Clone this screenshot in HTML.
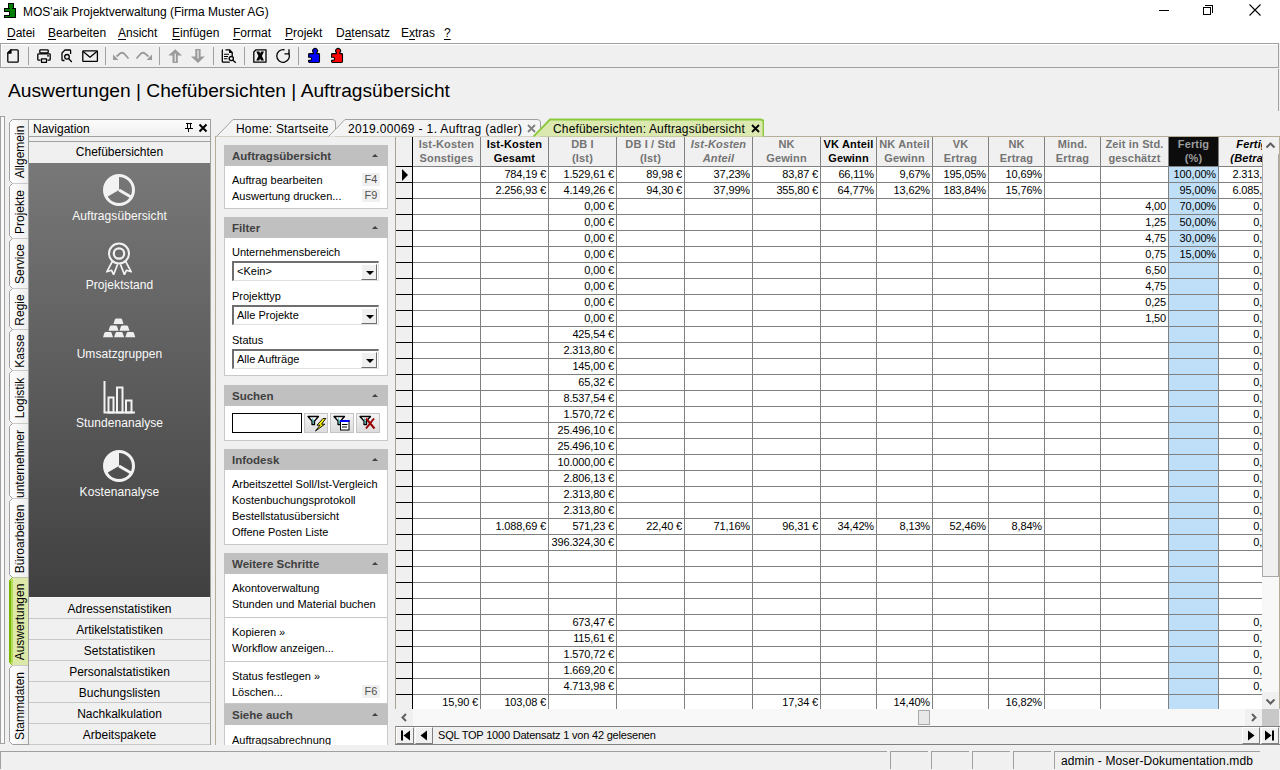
<!DOCTYPE html><html><head><meta charset="utf-8"><style>
*{margin:0;padding:0;box-sizing:border-box}
html,body{width:1280px;height:770px;overflow:hidden;background:#f0f0f0;font-family:"Liberation Sans",sans-serif;color:#000}
.a{position:absolute}
.nw{white-space:nowrap}
#title{left:0;top:0;width:1280px;height:43px;background:#fff}
.menu span{position:absolute;top:26px;font-size:12px;white-space:nowrap}
.menu u{text-decoration:underline;text-underline-offset:1.5px;text-decoration-thickness:1px}
#tb{left:0;top:43px;width:1279px;height:25px;border:1px solid #a0a0a0;background:#f0f0f0;box-shadow:inset 1px 1px 0 #fff}
.sep{position:absolute;top:3px;width:1px;height:18px;background:#a0a0a0}
#heading{left:8px;top:80px;font-size:19.2px;white-space:nowrap}
.vtx{position:absolute;left:19.5px;width:0;height:0}
.vtx span{position:absolute;left:0;top:0;transform:translate(-50%,-50%) rotate(-90deg);font-size:12px;line-height:14px;white-space:nowrap}
.navi{position:absolute;left:29px;width:181px;text-align:center;color:#fafafa;font-size:12px;white-space:nowrap;letter-spacing:0.08px}
.nb{position:absolute;left:29px;width:181px;height:21px;border-bottom:1px solid #c8c8c8;background:#f0f0f0;text-align:center;font-size:12px;line-height:22px;overflow:hidden}
.tp{position:absolute;left:224px;width:164px;background:#fff;border:1px solid #c8c8c8;border-top:none;font-size:11px}
.tph{position:absolute;left:224px;width:164px;height:21px;background:#c0c0c0;font-size:11.5px;font-weight:bold;color:#404040;line-height:23px;padding-left:8px}
.tph i{position:absolute;right:10px;top:9px;width:0;height:0;border-left:3px solid transparent;border-right:3px solid transparent;border-bottom:3px solid #404040}
.ti{position:absolute;left:7px;white-space:nowrap;font-size:11px}
.fk{position:absolute;left:137px;width:18px;height:13px;background:#f0f0f0;color:#505050;font-size:11px;text-align:center;line-height:13px}
.dd{position:absolute;left:232px;width:147px;height:20px;background:#fff;border-top:2px solid #6e6e6e;border-left:2px solid #6e6e6e;border-bottom:1px solid #e0e0e0;border-right:1px solid #e0e0e0;font-size:11px;line-height:16px;padding-left:3px}
.dd b{position:absolute;right:1px;top:1px;width:16px;height:16px;background:#f0f0f0;border-right:1px solid #6e6e6e;border-bottom:1px solid #6e6e6e;border-top:1px solid #fff;border-left:1px solid #fff}
.dd b:after{content:"";position:absolute;left:4px;top:6px;border-left:4px solid transparent;border-right:4px solid transparent;border-top:4px solid #000}
.gh{position:absolute;top:0px;height:28px;text-align:center;font-size:11px;line-height:14px;white-space:nowrap;overflow:hidden;letter-spacing:0.15px}
.gc{position:absolute;height:15px;text-align:right;font-size:11px;line-height:15px;padding-right:2px;white-space:nowrap;overflow:hidden;letter-spacing:-0.15px}
.sb{position:absolute;top:413px;width:24px;height:20px;background:linear-gradient(#f4f4f4,#dcdcdc);border:1px solid #c4c4c4}
</style></head><body>
<div id="title" class="a">
<svg class="a" style="left:0;top:0" width="20" height="20" viewBox="0 0 20 20" shape-rendering="crispEdges"><path d="M8.5 3H14V4H14V8H16V9H16V18H4V16H4V8H8V3Z" fill="#000"/><rect x="9" y="4" width="4" height="4" fill="#008000"/><rect x="10" y="7" width="2" height="2" fill="#008000"/><rect x="5" y="9" width="10" height="8" fill="#008000"/><rect x="4" y="11" width="6" height="5" fill="#000"/><rect x="4" y="12" width="5" height="3" fill="#fff"/><rect x="5" y="16" width="1" height="1" fill="#008000"/></svg>
<div class="a nw" style="left:23px;top:5px;font-size:12px">MOS'aik Projektverwaltung (Firma Muster AG)</div>
<div class="a" style="left:1159px;top:10px;width:10px;height:1px;background:#000"></div>
<div class="a" style="left:1205px;top:5px;width:8px;height:8px;border-top:1px solid #000;border-right:1px solid #000"></div>
<div class="a" style="left:1203px;top:7px;width:8px;height:8px;border:1px solid #000;background:#fff"></div>
<svg class="a" style="left:1249px;top:4px" width="12" height="12" viewBox="0 0 12 12"><path d="M0.5 0.5L11.5 11.5M11.5 0.5L0.5 11.5" stroke="#000" stroke-width="1.1"/></svg>
<div class="menu">
<span style="left:7px"><u>D</u>atei</span>
<span style="left:48px"><u>B</u>earbeiten</span>
<span style="left:118px"><u>A</u>nsicht</span>
<span style="left:172px"><u>E</u>infügen</span>
<span style="left:233px"><u>F</u>ormat</span>
<span style="left:285px"><u>P</u>rojekt</span>
<span style="left:336px">D<u>a</u>tensatz</span>
<span style="left:401px">E<u>x</u>tras</span>
<span style="left:444px"><u>?</u></span>
</div></div>
<div id="tb" class="a">
<div class="sep" style="left:27px"></div>
<div class="sep" style="left:104px"></div>
<div class="sep" style="left:158px"></div>
<div class="sep" style="left:212px"></div>
<div class="sep" style="left:243px"></div>
<div class="sep" style="left:297px"></div>
</div>
<svg class="a" style="left:0;top:43px" width="360" height="25" viewBox="0 43 360 25">
<g fill="none" stroke="#000" stroke-width="1.3" stroke-linejoin="round">
<path d="M11 49.8H17.2Q18.2 49.8 18.2 50.8V61.2Q18.2 62.2 17.2 62.2H8.8Q7.8 62.2 7.8 61.2V53Z"/>
<path d="M8 53L11 50V53Z" fill="#000"/>
<rect x="39.8" y="49.8" width="8.4" height="3.2" rx="0.8"/>
<path d="M40.5 60.2H38.6Q37.8 60.2 37.8 59.4V54.6Q37.8 53.8 38.6 53.8H49.4Q50.2 53.8 50.2 54.6V59.4Q50.2 60.2 49.4 60.2H47.5"/>
<rect x="41.5" y="58.8" width="5" height="3.5"/>
<path d="M64.5 60.5H62.8Q62 60.5 62 59.7V53L65 50H69.8Q70.6 50 70.6 50.8V54"/>
<circle cx="67" cy="56.8" r="2.3"/>
<path d="M68.8 58.8L71.8 62"/>
<rect x="82.8" y="50.8" width="14.6" height="10.6" rx="0.6"/>
<path d="M83.2 51.4L90 57.2L96.8 51.4"/>
<path d="M225.5 49.8H229.5L232.2 52.5V56 M229.8 62.2H223Q222.3 62.2 222.3 61.5V50.5Q222.3 49.8 223 49.8" />
<path d="M224 54.3H229 M224 56.5H228 M224 58.7H227.5" stroke-width="1.1"/>
<circle cx="231.3" cy="58.6" r="2.1"/>
<path d="M232.8 60.2L235.8 62.8"/>
<path d="M256 49.8H266V62.2H253.8V52Z"/>
<path d="M284.6 49.9A6.3 6.3 0 1 0 288.6 53" />
<path d="M289 49.2V53.8H284.5" />
</g>
<path d="M229 49.5L232.5 53H229Z" fill="#000"/><circle cx="48" cy="55.8" r="0.9" fill="#000"/>
<path d="M256.3 51.5H259.3L260.2 53.5L261.1 51.5H264L261.9 56L264 60.6H261L260.1 58.4L259.2 60.6H256.2L258.4 56Z" fill="#000"/>
<g fill="none" stroke="#9a9a9a" stroke-width="1.8">
<path d="M128.5 58.5L124 53.5Q122 52 120 53.5L116.5 56.5"/>
<path d="M136.5 58.5L141 53.5Q143 52 145 53.5L148.5 56.5"/>
</g>
<path d="M113 54.5V60H118.5Z" fill="#9a9a9a"/>
<path d="M152 54.5V60H146.5Z" fill="#9a9a9a"/>
<path d="M175.2 49.2L182 55.5H177.8V63H172.5V55.5H168.3Z" fill="#9a9a9a"/>
<path d="M175.2 53.5V61.8" stroke="#fff" stroke-width="1"/>
<path d="M198 63L191 56.5H195.3V49H200.6V56.5H204.8Z" fill="#9a9a9a"/>
<path d="M198 50.2V58.5" stroke="#fff" stroke-width="1"/>
<g stroke="#000" stroke-width="1.1" stroke-linejoin="round">
<path d="M309.5 53.6H313.4V52.6A2.4 2.4 0 1 1 316.8 52.6V53.6H318.6Q319.5 53.6 319.5 54.5V61.6Q319.5 62.5 318.6 62.5H309.5Q308.6 62.5 308.6 61.6V60.4H310A1.6 1.6 0 1 0 310 57.2H308.6V54.5Q308.6 53.6 309.5 53.6Z" fill="#0000ff"/>
<path d="M332.5 53.6H336.4V52.6A2.4 2.4 0 1 1 339.8 52.6V53.6H341.6Q342.5 53.6 342.5 54.5V61.6Q342.5 62.5 341.6 62.5H332.5Q331.6 62.5 331.6 61.6V60.4H333A1.6 1.6 0 1 0 333 57.2H331.6V54.5Q331.6 53.6 332.5 53.6Z" fill="#ff0000"/>
</g>
</svg>
<div class="a" style="left:1278px;top:69px;width:1px;height:42px;background:#a0a0a0"></div>
<div id="heading" class="a">Auswertungen | Chefübersichten | Auftragsübersicht</div>
<div class="a" style="left:0;top:116px;width:5px;height:628px;border:1px solid #a0a0a0;border-left:1px solid #a0a0a0;background:#fafafa"></div>
<svg class="a" style="left:0;top:0" width="30" height="770" viewBox="0 0 30 770"><defs><linearGradient id="vg" x1="0" x2="1" y1="0" y2="0"><stop offset="0" stop-color="#ffffff"/><stop offset="1" stop-color="#eeeeee"/></linearGradient></defs><path d="M9.5 122.5L12.5 119.5H28V183.5H12.5L9.5 180.5Z" fill="url(#vg)"/><path d="M9.5 122.5V180.5" stroke="#a0a0a0" stroke-width="1"/><path d="M9.5 122.5L12.5 119.5M9.5 180.5L12.5 183.5" stroke="#a0a0a0" stroke-width="1"/><path d="M12.5 183.5H28.5" stroke="#a0a0a0" stroke-width="1"/><path d="M9.5 186.5L12.5 183.5H28V238.5H12.5L9.5 235.5Z" fill="url(#vg)"/><path d="M9.5 186.5V235.5" stroke="#a0a0a0" stroke-width="1"/><path d="M9.5 186.5L12.5 183.5M9.5 235.5L12.5 238.5" stroke="#a0a0a0" stroke-width="1"/><path d="M12.5 238.5H28.5" stroke="#a0a0a0" stroke-width="1"/><path d="M9.5 241.5L12.5 238.5H28V288.5H12.5L9.5 285.5Z" fill="url(#vg)"/><path d="M9.5 241.5V285.5" stroke="#a0a0a0" stroke-width="1"/><path d="M9.5 241.5L12.5 238.5M9.5 285.5L12.5 288.5" stroke="#a0a0a0" stroke-width="1"/><path d="M12.5 288.5H28.5" stroke="#a0a0a0" stroke-width="1"/><path d="M9.5 291.5L12.5 288.5H28V329.5H12.5L9.5 326.5Z" fill="url(#vg)"/><path d="M9.5 291.5V326.5" stroke="#a0a0a0" stroke-width="1"/><path d="M9.5 291.5L12.5 288.5M9.5 326.5L12.5 329.5" stroke="#a0a0a0" stroke-width="1"/><path d="M12.5 329.5H28.5" stroke="#a0a0a0" stroke-width="1"/><path d="M9.5 332.5L12.5 329.5H28V370.5H12.5L9.5 367.5Z" fill="url(#vg)"/><path d="M9.5 332.5V367.5" stroke="#a0a0a0" stroke-width="1"/><path d="M9.5 332.5L12.5 329.5M9.5 367.5L12.5 370.5" stroke="#a0a0a0" stroke-width="1"/><path d="M12.5 370.5H28.5" stroke="#a0a0a0" stroke-width="1"/><path d="M9.5 373.5L12.5 370.5H28V423.5H12.5L9.5 420.5Z" fill="url(#vg)"/><path d="M9.5 373.5V420.5" stroke="#a0a0a0" stroke-width="1"/><path d="M9.5 373.5L12.5 370.5M9.5 420.5L12.5 423.5" stroke="#a0a0a0" stroke-width="1"/><path d="M12.5 423.5H28.5" stroke="#a0a0a0" stroke-width="1"/><path d="M9.5 426.5L12.5 423.5H28V498.5H12.5L9.5 495.5Z" fill="url(#vg)"/><path d="M9.5 426.5V495.5" stroke="#a0a0a0" stroke-width="1"/><path d="M9.5 426.5L12.5 423.5M9.5 495.5L12.5 498.5" stroke="#a0a0a0" stroke-width="1"/><path d="M12.5 498.5H28.5" stroke="#a0a0a0" stroke-width="1"/><path d="M9.5 501.5L12.5 498.5H28V577.5H12.5L9.5 574.5Z" fill="url(#vg)"/><path d="M9.5 501.5V574.5" stroke="#a0a0a0" stroke-width="1"/><path d="M9.5 501.5L12.5 498.5M9.5 574.5L12.5 577.5" stroke="#a0a0a0" stroke-width="1"/><path d="M12.5 577.5H28.5" stroke="#a0a0a0" stroke-width="1"/><path d="M9.5 580.5L12.5 577.5H28V665.5H12.5L9.5 662.5Z" fill="#dde9a9"/><path d="M10 580.5V662.5" stroke="#78b800" stroke-width="2"/><path d="M12 579.5V663.5" stroke="#b4dc5a" stroke-width="2"/><path d="M9.5 580.5L12.5 577.5M9.5 662.5L12.5 665.5" stroke="#80c000" stroke-width="1"/><path d="M12.5 665.5H28.5" stroke="#a0a0a0" stroke-width="1"/><path d="M9.5 668.5L12.5 665.5H28V744.5H12.5L9.5 741.5Z" fill="url(#vg)"/><path d="M9.5 668.5V741.5" stroke="#a0a0a0" stroke-width="1"/><path d="M9.5 668.5L12.5 665.5M9.5 741.5L12.5 744.5" stroke="#a0a0a0" stroke-width="1"/><path d="M12.5 744.5H28.5" stroke="#a0a0a0" stroke-width="1"/><path d="M12.5 119.5H28.5" stroke="#a0a0a0" stroke-width="1"/></svg>
<div class="vtx" style="top:152.0px"><span>Allgemein</span></div>
<div class="vtx" style="top:211.5px"><span>Projekte</span></div>
<div class="vtx" style="top:264.0px"><span>Service</span></div>
<div class="vtx" style="top:309.5px"><span>Regie</span></div>
<div class="vtx" style="top:350.5px"><span>Kasse</span></div>
<div class="vtx" style="top:397.5px"><span>Logistik</span></div>
<div class="vtx" style="top:463.5px"><span>unternehmer</span></div>
<div class="vtx" style="top:538.5px"><span>Büroarbeiten</span></div>
<div class="vtx" style="top:622.0px"><span>Auswertungen</span></div>
<div class="vtx" style="top:705.5px"><span>Stammdaten</span></div>
<div class="a" style="left:12px;top:424px;width:16px;height:74px;overflow:hidden"></div>
<div class="a" style="left:28px;top:119px;width:183px;height:626px;border:1px solid #a0a0a0;background:#f0f0f0"></div>
<div class="a" style="left:29px;top:120px;width:181px;height:17px;background:linear-gradient(#fcfcfc,#f0f0f0);border-bottom:1px solid #a0a0a0"></div>
<div class="a nw" style="left:33px;top:122px;font-size:12px">Navigation</div>
<svg class="a" style="left:184px;top:123px" width="10" height="10" viewBox="0 0 10 10" shape-rendering="crispEdges"><path d="M2 0h6v1H7v4h2v1H1V5h2V1H2z" fill="#000"/><rect x="4" y="1" width="2" height="4" fill="#f4f4f4"/><rect x="4" y="6" width="1" height="3" fill="#000"/></svg>
<svg class="a" style="left:198px;top:123px" width="10" height="10" viewBox="0 0 10 10"><path d="M1.5 1.5L8.5 8.5M8.5 1.5L1.5 8.5" stroke="#000" stroke-width="2"/></svg>
<div class="a" style="left:29px;top:141px;width:181px;height:22px;border-top:1px solid #a0a0a0;background:#f0f0f0;text-align:center;font-size:12px;line-height:21px">Chefübersichten</div>
<div class="a" style="left:29px;top:163px;width:181px;height:434px;background:linear-gradient(#787878,#404040)"></div>
<svg class="a" style="left:101px;top:172px" width="36" height="36" viewBox="0 0 36 36"><circle cx="18" cy="18" r="14.5" fill="none" stroke="#f2f2f2" stroke-width="3"/><path d="M18 18L18 3.5A14.5 14.5 0 0 0 5.44 25.25Z" fill="#f2f2f2"/><path d="M18 18L30.56 25.25" stroke="#f2f2f2" stroke-width="3"/></svg>
<div class="navi" style="top:209px">Auftragsübersicht</div>
<svg class="a" style="left:104px;top:241px" width="30" height="34" viewBox="0 0 30 34"><circle cx="15" cy="12.5" r="10" fill="none" stroke="#f2f2f2" stroke-width="2"/><circle cx="15" cy="12.5" r="5.2" fill="none" stroke="#f2f2f2" stroke-width="2.2"/><path d="M8.3 20.5L2.8 30.8L7.6 29.3L9.6 33.6L13.6 23.2M21.7 20.5L27.2 30.8L22.4 29.3L20.4 33.6L16.4 23.2" fill="none" stroke="#f2f2f2" stroke-width="1.7" stroke-linejoin="round"/></svg>
<div class="navi" style="top:278px">Projektstand</div>
<svg class="a" style="left:99px;top:313px" width="40" height="28" viewBox="99 313 40 28"><path d="M113.5 323.9L114.8 319.8Q115.1 318.5 116.4 318.5H120.6Q121.9 318.5 122.2 319.8L123.5 323.9ZM108.5 330.8L109.8 326.7Q110.1 325.4 111.4 325.4H115.6Q116.9 325.4 117.2 326.7L118.5 330.8ZM119.5 330.8L120.8 326.7Q121.1 325.4 122.4 325.4H126.6Q127.9 325.4 128.2 326.7L129.5 330.8ZM103.0 337.3L104.3 333.2Q104.6 331.9 105.9 331.9H110.1Q111.4 331.9 111.7 333.2L113.0 337.3ZM114.1 337.3L115.4 333.2Q115.7 331.9 117.0 331.9H121.2Q122.5 331.9 122.8 333.2L124.1 337.3ZM125.3 337.3L126.6 333.2Q126.9 331.9 128.2 331.9H132.4Q133.7 331.9 134.0 333.2L135.3 337.3Z" fill="#eeeeee"/></svg>
<div class="navi" style="top:347px">Umsatzgruppen</div>
<svg class="a" style="left:102px;top:380px" width="36" height="36" viewBox="0 0 36 36"><path d="M2.5 1V32.5H33" fill="none" stroke="#f2f2f2" stroke-width="2"/><rect x="6.5" y="17.5" width="5" height="15" fill="none" stroke="#f2f2f2" stroke-width="2"/><rect x="15" y="7.5" width="5.5" height="25" fill="none" stroke="#f2f2f2" stroke-width="2"/><rect x="24" y="20.5" width="5.5" height="12" fill="none" stroke="#f2f2f2" stroke-width="2"/></svg>
<div class="navi" style="top:416px">Stundenanalyse</div>
<svg class="a" style="left:101px;top:448px" width="36" height="36" viewBox="0 0 36 36"><circle cx="18" cy="18" r="14.5" fill="none" stroke="#f2f2f2" stroke-width="3"/><path d="M18 18L18 3.5A14.5 14.5 0 0 0 5.44 25.25Z" fill="#f2f2f2"/><path d="M18 18L30.56 25.25" stroke="#f2f2f2" stroke-width="3"/></svg>
<div class="navi" style="top:485px">Kostenanalyse</div>
<div class="nb" style="top:598px">Adressenstatistiken</div>
<div class="nb" style="top:619px">Artikelstatistiken</div>
<div class="nb" style="top:640px">Setstatistiken</div>
<div class="nb" style="top:661px">Personalstatistiken</div>
<div class="nb" style="top:682px">Buchungslisten</div>
<div class="nb" style="top:703px">Nachkalkulation</div>
<div class="nb" style="top:724px">Arbeitspakete</div>
<div class="a" style="left:29px;top:597px;width:181px;height:1px;background:#f6f6f6"></div>
<div class="a" style="left:215px;top:136px;width:1065px;height:609px;border-top:1px solid #b4ad98;border-left:1px solid #b4ad98;background:#f0f0f0"></div>
<svg class="a" style="left:216px;top:118px" width="120" height="19" viewBox="0 0 120 19"><path d="M0.5 18.5L17 1.5H116.0Q119.5 1.5 119.5 4V18.5" fill="#f4f4f4" stroke="#a0a0a0" stroke-width="1.0"/></svg>
<svg class="a" style="left:328px;top:118px" width="213" height="19" viewBox="0 0 213 19"><path d="M0.5 18.5L17 1.5H209.0Q212.5 1.5 212.5 4V18.5" fill="#f4f4f4" stroke="#a0a0a0" stroke-width="1.0"/></svg>
<svg class="a" style="left:533px;top:118px" width="231" height="19" viewBox="0 0 231 19"><path d="M0.5 18.5L17 1.5H227.0Q230.5 1.5 230.5 4V18.5" fill="#dbe9b0" stroke="#8cc83c" stroke-width="1.8"/></svg>
<div class="a nw" style="left:236px;top:122px;font-size:12px;letter-spacing:0.2px">Home: Startseite</div>
<div class="a nw" style="left:348px;top:122px;font-size:12px;letter-spacing:0.35px">2019.00069 - 1. Auftrag (adler)</div>
<svg class="a" style="left:527px;top:124px" width="9" height="9" viewBox="0 0 9 9"><path d="M1 1L8 8M8 1L1 8" stroke="#808080" stroke-width="1.8"/></svg>
<div class="a nw" style="left:553px;top:122px;font-size:12px;letter-spacing:0.15px">Chefübersichten: Auftragsübersicht</div>
<svg class="a" style="left:751px;top:124px" width="9" height="9" viewBox="0 0 9 9"><path d="M1 1L8 8M8 1L1 8" stroke="#000" stroke-width="1.8"/></svg>
<div class="tph" style="top:145px">Auftragsübersicht<i></i></div>
<div class="tp" style="top:166px;height:43px">
<div class="ti" style="top:8px">Auftrag bearbeiten</div><div class="fk" style="top:7px">F4</div>
<div class="ti" style="top:24px">Auswertung drucken...</div><div class="fk" style="top:23px">F9</div>
</div>
<div class="tph" style="top:217px">Filter<i></i></div>
<div class="tp" style="top:238px;height:138px">
<div class="ti" style="top:8px">Unternehmensbereich</div>
<div class="ti" style="top:52px">Projekttyp</div>
<div class="ti" style="top:96px">Status</div>
</div>
<div class="dd" style="top:261px">&lt;Kein&gt;<b></b></div>
<div class="dd" style="top:305px">Alle Projekte<b></b></div>
<div class="dd" style="top:349px">Alle Aufträge<b></b></div>
<div class="tph" style="top:385px">Suchen<i></i></div>
<div class="tp" style="top:406px;height:35px"></div>
<div class="a" style="left:232px;top:413px;width:70px;height:20px;border:1px solid #000;background:#fff"></div>
<div class="sb" style="left:304px"><svg class="a" style="left:0;top:0" width="22" height="18" viewBox="0 0 22 18"><path d="M3 2.5H13.5L9.5 7V10.5H7V7Z" fill="#fff" stroke="#000" stroke-width="1.3" stroke-linejoin="round"/><path d="M7.5 4.5L8.3 7.5V9.5" stroke="#20b0b0" stroke-width="1"/><path d="M18 4.5L12 11.2H15L10.5 17L19.8 10.2H16.5L20.8 4.5Z" fill="#f8f000" stroke="#000" stroke-width="0.9" stroke-linejoin="round"/></svg></div>
<div class="sb" style="left:330px"><svg class="a" style="left:0;top:0" width="22" height="18" viewBox="0 0 22 18"><path d="M3 2.5H13.5L9.5 7V10.5H7V7Z" fill="#fff" stroke="#000" stroke-width="1.3" stroke-linejoin="round"/><path d="M7.5 4.5L8.3 7.5V9.5" stroke="#20b0b0" stroke-width="1"/><rect x="9.5" y="6.5" width="8.5" height="9.5" fill="#fff" stroke="#000" stroke-width="1"/><rect x="9" y="6" width="9.5" height="2" fill="#0000f0"/><path d="M11 10.5H16.5M11 13H16" stroke="#000" stroke-width="1"/></svg></div>
<div class="sb" style="left:356px"><svg class="a" style="left:0;top:0" width="22" height="18" viewBox="0 0 22 18"><path d="M3 2.5H13.5L9.5 7V10.5H7V7Z" fill="#fff" stroke="#000" stroke-width="1.3" stroke-linejoin="round"/><path d="M7.5 4.5L8.3 7.5V9.5" stroke="#20b0b0" stroke-width="1"/><path d="M9 4.5L17.5 14.5M17 4.5L9 14.5" stroke="#9a0000" stroke-width="2"/></svg></div>
<div class="tph" style="top:449px">Infodesk<i></i></div>
<div class="tp" style="top:470px;height:75px">
<div class="ti" style="top:8px">Arbeitszettel Soll/Ist-Vergleich</div>
<div class="ti" style="top:24px">Kostenbuchungsprotokoll</div>
<div class="ti" style="top:40px">Bestellstatusübersicht</div>
<div class="ti" style="top:56px">Offene Posten Liste</div>
</div>
<div class="tph" style="top:553px">Weitere Schritte<i></i></div>
<div class="tp" style="top:574px;height:130px">
<div class="ti" style="top:8px">Akontoverwaltung</div>
<div class="ti" style="top:24px">Stunden und Material buchen</div>
<div class="a" style="left:0;top:43px;width:162px;height:1px;background:#c8c8c8"></div>
<div class="ti" style="top:52px">Kopieren »</div>
<div class="ti" style="top:68px">Workflow anzeigen...</div>
<div class="a" style="left:0;top:87px;width:162px;height:1px;background:#c8c8c8"></div>
<div class="ti" style="top:96px">Status festlegen »</div>
<div class="ti" style="top:112px">Löschen...</div>
<div class="fk" style="top:111px">F6</div>
</div>
<div class="tph" style="top:704px">Siehe auch<i></i></div>
<div class="tp" style="top:725px;height:20px;border-bottom:none;overflow:hidden"><div class="ti" style="top:9px">Auftragsabrechnung</div></div>
<div class="a" style="left:215px;top:745px;width:180px;height:6px;background:#f0f0f0"></div>
<div class="a" style="left:395px;top:137px;width:867px;height:572px;overflow:hidden;background:#fff">
<div class="a" style="left:0;top:0;width:867px;height:29px;background:#f0f0f0"></div>
<div class="a" style="left:1px;top:29px;width:16px;height:543px;background:#f0f0f0"></div>
<div class="a" style="left:774px;top:0;width:49px;height:29px;background:#0c0c0c"></div>
<div class="a" style="left:774px;top:30px;width:49px;height:542px;background:#bfdff8"></div>
<div class="a" style="left:0;top:0;width:1px;height:572px;background:#a8a290"></div>
<div class="a" style="left:1px;top:29px;width:866px;height:1px;background:#808080"></div>
<div class="a" style="left:1px;top:29px;width:17px;height:1px;background:#000"></div>
<div class="a" style="left:18px;top:45px;width:849px;height:1px;background:#808080"></div>
<div class="a" style="left:1px;top:45px;width:17px;height:1px;background:#000"></div>
<div class="a" style="left:18px;top:61px;width:849px;height:1px;background:#808080"></div>
<div class="a" style="left:1px;top:61px;width:17px;height:1px;background:#000"></div>
<div class="a" style="left:18px;top:77px;width:849px;height:1px;background:#808080"></div>
<div class="a" style="left:1px;top:77px;width:17px;height:1px;background:#000"></div>
<div class="a" style="left:18px;top:93px;width:849px;height:1px;background:#808080"></div>
<div class="a" style="left:1px;top:93px;width:17px;height:1px;background:#000"></div>
<div class="a" style="left:18px;top:109px;width:849px;height:1px;background:#808080"></div>
<div class="a" style="left:1px;top:109px;width:17px;height:1px;background:#000"></div>
<div class="a" style="left:18px;top:125px;width:849px;height:1px;background:#808080"></div>
<div class="a" style="left:1px;top:125px;width:17px;height:1px;background:#000"></div>
<div class="a" style="left:18px;top:141px;width:849px;height:1px;background:#808080"></div>
<div class="a" style="left:1px;top:141px;width:17px;height:1px;background:#000"></div>
<div class="a" style="left:18px;top:157px;width:849px;height:1px;background:#808080"></div>
<div class="a" style="left:1px;top:157px;width:17px;height:1px;background:#000"></div>
<div class="a" style="left:18px;top:173px;width:849px;height:1px;background:#808080"></div>
<div class="a" style="left:1px;top:173px;width:17px;height:1px;background:#000"></div>
<div class="a" style="left:18px;top:189px;width:849px;height:1px;background:#808080"></div>
<div class="a" style="left:1px;top:189px;width:17px;height:1px;background:#000"></div>
<div class="a" style="left:18px;top:205px;width:849px;height:1px;background:#808080"></div>
<div class="a" style="left:1px;top:205px;width:17px;height:1px;background:#000"></div>
<div class="a" style="left:18px;top:221px;width:849px;height:1px;background:#808080"></div>
<div class="a" style="left:1px;top:221px;width:17px;height:1px;background:#000"></div>
<div class="a" style="left:18px;top:237px;width:849px;height:1px;background:#808080"></div>
<div class="a" style="left:1px;top:237px;width:17px;height:1px;background:#000"></div>
<div class="a" style="left:18px;top:253px;width:849px;height:1px;background:#808080"></div>
<div class="a" style="left:1px;top:253px;width:17px;height:1px;background:#000"></div>
<div class="a" style="left:18px;top:269px;width:849px;height:1px;background:#808080"></div>
<div class="a" style="left:1px;top:269px;width:17px;height:1px;background:#000"></div>
<div class="a" style="left:18px;top:285px;width:849px;height:1px;background:#808080"></div>
<div class="a" style="left:1px;top:285px;width:17px;height:1px;background:#000"></div>
<div class="a" style="left:18px;top:301px;width:849px;height:1px;background:#808080"></div>
<div class="a" style="left:1px;top:301px;width:17px;height:1px;background:#000"></div>
<div class="a" style="left:18px;top:317px;width:849px;height:1px;background:#808080"></div>
<div class="a" style="left:1px;top:317px;width:17px;height:1px;background:#000"></div>
<div class="a" style="left:18px;top:333px;width:849px;height:1px;background:#808080"></div>
<div class="a" style="left:1px;top:333px;width:17px;height:1px;background:#000"></div>
<div class="a" style="left:18px;top:349px;width:849px;height:1px;background:#808080"></div>
<div class="a" style="left:1px;top:349px;width:17px;height:1px;background:#000"></div>
<div class="a" style="left:18px;top:365px;width:849px;height:1px;background:#808080"></div>
<div class="a" style="left:1px;top:365px;width:17px;height:1px;background:#000"></div>
<div class="a" style="left:18px;top:381px;width:849px;height:1px;background:#808080"></div>
<div class="a" style="left:1px;top:381px;width:17px;height:1px;background:#000"></div>
<div class="a" style="left:18px;top:397px;width:849px;height:1px;background:#808080"></div>
<div class="a" style="left:1px;top:397px;width:17px;height:1px;background:#000"></div>
<div class="a" style="left:18px;top:413px;width:849px;height:1px;background:#808080"></div>
<div class="a" style="left:1px;top:413px;width:17px;height:1px;background:#000"></div>
<div class="a" style="left:18px;top:429px;width:849px;height:1px;background:#808080"></div>
<div class="a" style="left:1px;top:429px;width:17px;height:1px;background:#000"></div>
<div class="a" style="left:18px;top:445px;width:849px;height:1px;background:#808080"></div>
<div class="a" style="left:1px;top:445px;width:17px;height:1px;background:#000"></div>
<div class="a" style="left:18px;top:461px;width:849px;height:1px;background:#808080"></div>
<div class="a" style="left:1px;top:461px;width:17px;height:1px;background:#000"></div>
<div class="a" style="left:18px;top:477px;width:849px;height:1px;background:#808080"></div>
<div class="a" style="left:1px;top:477px;width:17px;height:1px;background:#000"></div>
<div class="a" style="left:18px;top:493px;width:849px;height:1px;background:#808080"></div>
<div class="a" style="left:1px;top:493px;width:17px;height:1px;background:#000"></div>
<div class="a" style="left:18px;top:509px;width:849px;height:1px;background:#808080"></div>
<div class="a" style="left:1px;top:509px;width:17px;height:1px;background:#000"></div>
<div class="a" style="left:18px;top:525px;width:849px;height:1px;background:#808080"></div>
<div class="a" style="left:1px;top:525px;width:17px;height:1px;background:#000"></div>
<div class="a" style="left:18px;top:541px;width:849px;height:1px;background:#808080"></div>
<div class="a" style="left:1px;top:541px;width:17px;height:1px;background:#000"></div>
<div class="a" style="left:18px;top:557px;width:849px;height:1px;background:#808080"></div>
<div class="a" style="left:1px;top:557px;width:17px;height:1px;background:#000"></div>
<div class="a" style="left:18px;top:573px;width:849px;height:1px;background:#808080"></div>
<div class="a" style="left:1px;top:573px;width:17px;height:1px;background:#000"></div>
<div class="a" style="left:17px;top:0;width:1px;height:572px;background:#000"></div>
<div class="a" style="left:85px;top:0;width:1px;height:572px;background:#808080"></div>
<div class="a" style="left:153px;top:0;width:1px;height:572px;background:#808080"></div>
<div class="a" style="left:221px;top:0;width:1px;height:572px;background:#808080"></div>
<div class="a" style="left:289px;top:0;width:1px;height:572px;background:#808080"></div>
<div class="a" style="left:357px;top:0;width:1px;height:572px;background:#808080"></div>
<div class="a" style="left:425px;top:0;width:1px;height:572px;background:#808080"></div>
<div class="a" style="left:481px;top:0;width:1px;height:572px;background:#808080"></div>
<div class="a" style="left:537px;top:0;width:1px;height:572px;background:#808080"></div>
<div class="a" style="left:593px;top:0;width:1px;height:572px;background:#808080"></div>
<div class="a" style="left:649px;top:0;width:1px;height:572px;background:#808080"></div>
<div class="a" style="left:705px;top:0;width:1px;height:572px;background:#808080"></div>
<div class="a" style="left:773px;top:0;width:1px;height:572px;background:#808080"></div>
<div class="a" style="left:823px;top:0;width:1px;height:572px;background:#808080"></div>
<div class="gh" style="left:18px;width:67px;color:#747474;font-weight:bold;">Ist-Kosten<br>Sonstiges</div>
<div class="gh" style="left:86px;width:67px;color:#000;font-weight:bold;">Ist-Kosten<br>Gesamt</div>
<div class="gh" style="left:154px;width:67px;color:#747474;font-weight:bold;">DB I<br>(Ist)</div>
<div class="gh" style="left:222px;width:67px;color:#747474;font-weight:bold;">DB I / Std<br>(Ist)</div>
<div class="gh" style="left:290px;width:67px;color:#747474;font-weight:bold;font-style:italic;">Ist-Kosten<br>Anteil</div>
<div class="gh" style="left:358px;width:67px;color:#747474;font-weight:bold;">NK<br>Gewinn</div>
<div class="gh" style="left:426px;width:55px;color:#000;font-weight:bold;">VK Anteil<br>Gewinn</div>
<div class="gh" style="left:482px;width:55px;color:#747474;font-weight:bold;">NK Anteil<br>Gewinn</div>
<div class="gh" style="left:538px;width:55px;color:#747474;font-weight:bold;">VK<br>Ertrag</div>
<div class="gh" style="left:594px;width:55px;color:#747474;font-weight:bold;">NK<br>Ertrag</div>
<div class="gh" style="left:650px;width:55px;color:#747474;font-weight:bold;">Mind.<br>Ertrag</div>
<div class="gh" style="left:706px;width:67px;color:#747474;font-weight:bold;">Zeit in Std.<br>geschätzt</div>
<div class="gh" style="left:774px;width:49px;color:#9c9c9c;font-weight:bold;">Fertig<br>(%)</div>
<div class="gh" style="left:824px;width:66px;color:#000;font-weight:bold;font-style:italic;">Fertig<br>(Betrag)</div>
<div class="gc" style="left:86px;top:30px;width:67px">784,19 €</div>
<div class="gc" style="left:154px;top:30px;width:67px">1.529,61 €</div>
<div class="gc" style="left:222px;top:30px;width:67px">89,98 €</div>
<div class="gc" style="left:290px;top:30px;width:67px">37,23%</div>
<div class="gc" style="left:358px;top:30px;width:67px">83,87 €</div>
<div class="gc" style="left:426px;top:30px;width:55px">66,11%</div>
<div class="gc" style="left:482px;top:30px;width:55px">9,67%</div>
<div class="gc" style="left:538px;top:30px;width:55px">195,05%</div>
<div class="gc" style="left:594px;top:30px;width:55px">10,69%</div>
<div class="gc" style="left:774px;top:30px;width:49px">100,00%</div>
<div class="gc" style="left:824px;top:30px;width:66px">2.313,80 €</div>
<div class="gc" style="left:86px;top:46px;width:67px">2.256,93 €</div>
<div class="gc" style="left:154px;top:46px;width:67px">4.149,26 €</div>
<div class="gc" style="left:222px;top:46px;width:67px">94,30 €</div>
<div class="gc" style="left:290px;top:46px;width:67px">37,99%</div>
<div class="gc" style="left:358px;top:46px;width:67px">355,80 €</div>
<div class="gc" style="left:426px;top:46px;width:55px">64,77%</div>
<div class="gc" style="left:482px;top:46px;width:55px">13,62%</div>
<div class="gc" style="left:538px;top:46px;width:55px">183,84%</div>
<div class="gc" style="left:594px;top:46px;width:55px">15,76%</div>
<div class="gc" style="left:774px;top:46px;width:49px">95,00%</div>
<div class="gc" style="left:824px;top:46px;width:66px">6.085,00 €</div>
<div class="gc" style="left:154px;top:62px;width:67px">0,00 €</div>
<div class="gc" style="left:706px;top:62px;width:67px">4,00</div>
<div class="gc" style="left:774px;top:62px;width:49px">70,00%</div>
<div class="gc" style="left:824px;top:62px;width:66px">0,00 €</div>
<div class="gc" style="left:154px;top:78px;width:67px">0,00 €</div>
<div class="gc" style="left:706px;top:78px;width:67px">1,25</div>
<div class="gc" style="left:774px;top:78px;width:49px">50,00%</div>
<div class="gc" style="left:824px;top:78px;width:66px">0,00 €</div>
<div class="gc" style="left:154px;top:94px;width:67px">0,00 €</div>
<div class="gc" style="left:706px;top:94px;width:67px">4,75</div>
<div class="gc" style="left:774px;top:94px;width:49px">30,00%</div>
<div class="gc" style="left:824px;top:94px;width:66px">0,00 €</div>
<div class="gc" style="left:154px;top:110px;width:67px">0,00 €</div>
<div class="gc" style="left:706px;top:110px;width:67px">0,75</div>
<div class="gc" style="left:774px;top:110px;width:49px">15,00%</div>
<div class="gc" style="left:824px;top:110px;width:66px">0,00 €</div>
<div class="gc" style="left:154px;top:126px;width:67px">0,00 €</div>
<div class="gc" style="left:706px;top:126px;width:67px">6,50</div>
<div class="gc" style="left:824px;top:126px;width:66px">0,00 €</div>
<div class="gc" style="left:154px;top:142px;width:67px">0,00 €</div>
<div class="gc" style="left:706px;top:142px;width:67px">4,75</div>
<div class="gc" style="left:824px;top:142px;width:66px">0,00 €</div>
<div class="gc" style="left:154px;top:158px;width:67px">0,00 €</div>
<div class="gc" style="left:706px;top:158px;width:67px">0,25</div>
<div class="gc" style="left:824px;top:158px;width:66px">0,00 €</div>
<div class="gc" style="left:154px;top:174px;width:67px">0,00 €</div>
<div class="gc" style="left:706px;top:174px;width:67px">1,50</div>
<div class="gc" style="left:824px;top:174px;width:66px">0,00 €</div>
<div class="gc" style="left:154px;top:190px;width:67px">425,54 €</div>
<div class="gc" style="left:824px;top:190px;width:66px">0,00 €</div>
<div class="gc" style="left:154px;top:206px;width:67px">2.313,80 €</div>
<div class="gc" style="left:824px;top:206px;width:66px">0,00 €</div>
<div class="gc" style="left:154px;top:222px;width:67px">145,00 €</div>
<div class="gc" style="left:824px;top:222px;width:66px">0,00 €</div>
<div class="gc" style="left:154px;top:238px;width:67px">65,32 €</div>
<div class="gc" style="left:824px;top:238px;width:66px">0,00 €</div>
<div class="gc" style="left:154px;top:254px;width:67px">8.537,54 €</div>
<div class="gc" style="left:824px;top:254px;width:66px">0,00 €</div>
<div class="gc" style="left:154px;top:270px;width:67px">1.570,72 €</div>
<div class="gc" style="left:824px;top:270px;width:66px">0,00 €</div>
<div class="gc" style="left:154px;top:286px;width:67px">25.496,10 €</div>
<div class="gc" style="left:824px;top:286px;width:66px">0,00 €</div>
<div class="gc" style="left:154px;top:302px;width:67px">25.496,10 €</div>
<div class="gc" style="left:824px;top:302px;width:66px">0,00 €</div>
<div class="gc" style="left:154px;top:318px;width:67px">10.000,00 €</div>
<div class="gc" style="left:824px;top:318px;width:66px">0,00 €</div>
<div class="gc" style="left:154px;top:334px;width:67px">2.806,13 €</div>
<div class="gc" style="left:824px;top:334px;width:66px">0,00 €</div>
<div class="gc" style="left:154px;top:350px;width:67px">2.313,80 €</div>
<div class="gc" style="left:824px;top:350px;width:66px">0,00 €</div>
<div class="gc" style="left:154px;top:366px;width:67px">2.313,80 €</div>
<div class="gc" style="left:824px;top:366px;width:66px">0,00 €</div>
<div class="gc" style="left:86px;top:382px;width:67px">1.088,69 €</div>
<div class="gc" style="left:154px;top:382px;width:67px">571,23 €</div>
<div class="gc" style="left:222px;top:382px;width:67px">22,40 €</div>
<div class="gc" style="left:290px;top:382px;width:67px">71,16%</div>
<div class="gc" style="left:358px;top:382px;width:67px">96,31 €</div>
<div class="gc" style="left:426px;top:382px;width:55px">34,42%</div>
<div class="gc" style="left:482px;top:382px;width:55px">8,13%</div>
<div class="gc" style="left:538px;top:382px;width:55px">52,46%</div>
<div class="gc" style="left:594px;top:382px;width:55px">8,84%</div>
<div class="gc" style="left:824px;top:382px;width:66px">0,00 €</div>
<div class="gc" style="left:154px;top:398px;width:67px">396.324,30 €</div>
<div class="gc" style="left:824px;top:398px;width:66px">0,00 €</div>
<div class="gc" style="left:154px;top:478px;width:67px">673,47 €</div>
<div class="gc" style="left:824px;top:478px;width:66px">0,00 €</div>
<div class="gc" style="left:154px;top:494px;width:67px">115,61 €</div>
<div class="gc" style="left:824px;top:494px;width:66px">0,00 €</div>
<div class="gc" style="left:154px;top:510px;width:67px">1.570,72 €</div>
<div class="gc" style="left:824px;top:510px;width:66px">0,00 €</div>
<div class="gc" style="left:154px;top:526px;width:67px">1.669,20 €</div>
<div class="gc" style="left:824px;top:526px;width:66px">0,00 €</div>
<div class="gc" style="left:154px;top:542px;width:67px">4.713,98 €</div>
<div class="gc" style="left:824px;top:542px;width:66px">0,00 €</div>
<div class="gc" style="left:18px;top:558px;width:67px">15,90 €</div>
<div class="gc" style="left:86px;top:558px;width:67px">103,08 €</div>
<div class="gc" style="left:358px;top:558px;width:67px">17,34 €</div>
<div class="gc" style="left:482px;top:558px;width:55px">14,40%</div>
<div class="gc" style="left:594px;top:558px;width:55px">16,82%</div>
<div class="a" style="left:7px;top:32px;width:0;height:0;border-top:6px solid transparent;border-bottom:6px solid transparent;border-left:6px solid #000"></div>
</div>
<div class="a" style="left:1262px;top:137px;width:17px;height:572px;background:#f8f8f8"></div>
<div class="a" style="left:1262px;top:137px;width:17px;height:17px;background:#f0f0f0"></div>
<div class="a" style="left:1262px;top:692px;width:17px;height:17px;background:#f0f0f0"></div>
<div class="a" style="left:1262px;top:154px;width:17px;height:423px;background:#f0f0f0;border:1px solid #a8a8a8;border-top:none"></div>
<div class="a" style="left:1279px;top:137px;width:1px;height:572px;background:#b4ad98"></div>
<svg class="a" style="left:1265px;top:141px" width="11" height="8" viewBox="0 0 11 8"><path d="M1.5 6.5L5.5 2.5L9.5 6.5" fill="none" stroke="#606060" stroke-width="2"/></svg>
<svg class="a" style="left:1265px;top:698px" width="11" height="8" viewBox="0 0 11 8"><path d="M1.5 1.5L5.5 5.5L9.5 1.5" fill="none" stroke="#606060" stroke-width="2"/></svg>
<div class="a" style="left:396px;top:709px;width:866px;height:17px;background:#f8f8f8"></div>
<div class="a" style="left:396px;top:709px;width:17px;height:17px;background:#f0f0f0"></div>
<div class="a" style="left:1245px;top:709px;width:17px;height:17px;background:#f0f0f0"></div>
<div class="a" style="left:918px;top:710px;width:12px;height:15px;background:#e8e8e8;border:1px solid #a8a8a8"></div>
<svg class="a" style="left:400px;top:712px" width="8" height="11" viewBox="0 0 8 11"><path d="M6 2L2.5 5.5L6 9" fill="none" stroke="#606060" stroke-width="2"/></svg>
<svg class="a" style="left:1250px;top:712px" width="8" height="11" viewBox="0 0 8 11"><path d="M2 2L5.5 5.5L2 9" fill="none" stroke="#606060" stroke-width="2"/></svg>
<div class="a" style="left:1262px;top:709px;width:17px;height:17px;background:#c8c8c8"></div>
<div class="a" style="left:395px;top:726px;width:885px;height:19px;background:#f0f0f0;border-top:1px solid #808080;border-bottom:1px solid #808080;border-left:1px solid #a8a290"></div>
<div class="a" style="left:396px;top:727px;width:18px;height:17px;border:1px solid #fff;border-right-color:#808080;border-bottom-color:#808080;background:#f0f0f0"><svg class="a" style="left:0;top:0" width="16" height="15" viewBox="0 0 16 15"><path d="M4 2.5h2v10H4z M13 2.5v10L6.5 7.5z" fill="#000"/></svg></div>
<div class="a" style="left:415px;top:727px;width:18px;height:17px;border:1px solid #fff;border-right-color:#808080;border-bottom-color:#808080;background:#f0f0f0"><svg class="a" style="left:0;top:0" width="16" height="15" viewBox="0 0 16 15"><path d="M11 2.5v10L4.5 7.5z" fill="#000"/></svg></div>
<div class="a nw" style="left:438px;top:729px;font-size:11px;letter-spacing:-0.2px">SQL TOP 1000 Datensatz 1 von 42 gelesenen</div>
<div class="a" style="left:1242px;top:727px;width:18px;height:17px;border:1px solid #fff;border-right-color:#808080;border-bottom-color:#808080;background:#f0f0f0"><svg class="a" style="left:0;top:0" width="16" height="15" viewBox="0 0 16 15"><path d="M5 2.5v10L11.5 7.5z" fill="#000"/></svg></div>
<div class="a" style="left:1261px;top:727px;width:18px;height:17px;border:1px solid #fff;border-right-color:#808080;border-bottom-color:#808080;background:#f0f0f0"><svg class="a" style="left:0;top:0" width="16" height="15" viewBox="0 0 16 15"><path d="M3 2.5v10L9.5 7.5z M10 2.5h2v10h-2z" fill="#000"/></svg></div>
<div class="a" style="left:0;top:745px;width:1280px;height:25px;background:#f0f0f0"></div>
<div class="a" style="left:0px;top:751px;width:887px;height:18px;border-top:1px solid #a0a0a0;border-left:1px solid #a0a0a0"></div>
<div class="a" style="left:890px;top:751px;width:38px;height:18px;border-top:1px solid #a0a0a0;border-left:1px solid #a0a0a0"></div>
<div class="a" style="left:931px;top:751px;width:38px;height:18px;border-top:1px solid #a0a0a0;border-left:1px solid #a0a0a0"></div>
<div class="a" style="left:972px;top:751px;width:38px;height:18px;border-top:1px solid #a0a0a0;border-left:1px solid #a0a0a0"></div>
<div class="a" style="left:1013px;top:751px;width:38px;height:18px;border-top:1px solid #a0a0a0;border-left:1px solid #a0a0a0"></div>
<div class="a" style="left:1054px;top:751px;width:206px;height:18px;border-top:1px solid #a0a0a0;border-left:1px solid #a0a0a0"></div>
<div class="a nw" style="left:1061px;top:754px;font-size:12px;letter-spacing:0.13px">admin - Moser-Dokumentation.mdb</div>
<div class="a" style="left:395px;top:744px;width:885px;height:1px;background:#808080"></div>
</body></html>
